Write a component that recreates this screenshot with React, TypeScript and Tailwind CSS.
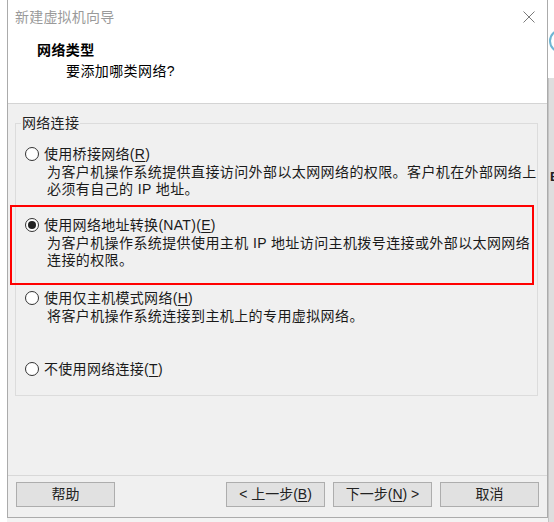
import React from "react";

function Radio({ checked = false }: { checked?: boolean }) {
  return (
    <span className="w-[14px] h-[14px] shrink-0 rounded-full border border-[#333] bg-white flex items-center justify-center">
      {checked && <span className="w-[8px] h-[8px] rounded-full bg-[#222]" />}
    </span>
  );
}

function U({ children }: { children: React.ReactNode }) {
  return <span className="underline underline-offset-[2px] decoration-[1px]">{children}</span>;
}

function Option({
  h,
  checked,
  label,
  desc,
}: {
  h: string;
  checked?: boolean;
  label: React.ReactNode;
  desc: string[];
}) {
  return (
    <div className={`${h} flex flex-col`}>
      <div className="h-[20px] flex items-center gap-[5px]">
        <Radio checked={checked} />
        <span className="text-[14px] leading-[20px] tracking-[0.3px]">{label}</span>
      </div>
      {desc.map((d, i) => (
        <div key={i} className="pl-[22px] text-[14px] leading-[17px] tracking-[0.4px]">
          {d}
        </div>
      ))}
    </div>
  );
}

function Btn({ children }: { children: React.ReactNode }) {
  return (
    <div className="w-[99px] h-[25px] bg-[#e1e1e1] border border-[#adadad] flex items-center justify-center text-[14px] text-[#222]">
      {children}
    </div>
  );
}

export default function App() {
  return (
    <div className="w-[554px] h-[522px] bg-white flex overflow-hidden relative font-['Liberation_Sans','Noto_Sans_CJK_SC',sans-serif] text-[#1a1a1a]">
      <div className="w-[7px] shrink-0" />
      <div className="flex flex-col shrink-0">
        <div className="w-[541px] h-[518px] border-x border-b border-[#ababab] flex flex-col">
          {/* title bar */}
          <div className="h-[33px] bg-white flex items-center justify-between pl-[7px] pr-[12px]">
            <span className="text-[14px] text-[#9a9a9a] tracking-[0.2px] leading-[20px]">新建虚拟机向导</span>
            <svg width="12" height="12" viewBox="0 0 12 12" className="mt-[1px]">
              <path d="M0.5 0.5 L11.5 11.5 M11.5 0.5 L0.5 11.5" stroke="#7a7a7a" strokeWidth="1" fill="none" />
            </svg>
          </div>
          {/* header */}
          <div className="h-[71px] bg-white pt-[7px] pl-[29px] border-b border-[#d4d4d4]">
            <div className="h-[20px] leading-[20px] font-bold text-[14px] tracking-[0.4px] text-black">网络类型</div>
            <div className="h-[22px] leading-[22px] pl-[29px] text-[14px] tracking-[0.4px] text-black">要添加哪类网络?</div>
          </div>
          {/* body */}
          <div className="h-[372px] bg-[#f0f0f0] border-b border-[#d8d8d8] pt-[19px] pl-[7px]">
            <div className="relative w-[523px] h-[273px] border border-[#dcdcdc] pt-[20px] pl-[9px]">
              <span className="absolute left-[5px] top-[-11px] px-[1px] bg-[#f0f0f0] text-[14px] leading-[20px] tracking-[0.3px] text-[#222]">
                网络连接
              </span>
              <Option
                h="h-[71px]"
                label={
                  <>
                    使用桥接网络(<U>R</U>)
                  </>
                }
                desc={["为客户机操作系统提供直接访问外部以太网网络的权限。客户机在外部网络上", "必须有自己的 IP 地址。"]}
              />
              <Option
                h="h-[73px]"
                checked
                label={
                  <>
                    使用网络地址转换(NAT)(<U>E</U>)
                  </>
                }
                desc={["为客户机操作系统提供使用主机 IP 地址访问主机拨号连接或外部以太网网络", "连接的权限。"]}
              />
              <Option
                h="h-[71px]"
                label={
                  <>
                    使用仅主机模式网络(<U>H</U>)
                  </>
                }
                desc={["将客户机操作系统连接到主机上的专用虚拟网络。"]}
              />
              <Option
                h="h-[20px]"
                label={
                  <>
                    不使用网络连接(<U>T</U>)
                  </>
                }
                desc={[]}
              />
            </div>
          </div>
          {/* footer */}
          <div className="flex-1 bg-[#f0f0f0] pt-[6px] px-[8px] flex items-start">
            <Btn>帮助</Btn>
            <div className="flex-1" />
            <div className="flex gap-[8px]">
              <Btn>
                <span>&lt; 上一步(<U>B</U>)</span>
              </Btn>
              <Btn>
                <span>下一步(<U>N</U>) &gt;</span>
              </Btn>
              <Btn>取消</Btn>
            </div>
          </div>
        </div>
        <div className="h-[4px] bg-[#f3f3f3]" />
      </div>
      {/* background window strip */}
      <div className="w-[6px] shrink-0 flex flex-col">
        <div className="h-[78px] bg-white">
          <svg width="6" height="78" viewBox="0 0 6 78">
            <circle cx="13" cy="41" r="11" stroke="#6fb6d4" strokeWidth="2" fill="none" />
          </svg>
        </div>
        <div className="flex-1 bg-[#dedede] border-l border-[#c4c4c4] relative overflow-hidden">
          <span className="absolute left-[1px] top-[92px] text-[13px] font-bold leading-[14px] text-[#222]">E</span>
        </div>
      </div>
      {/* annotation */}
      <div className="absolute left-[10px] top-[205px] w-[524px] h-[80px] border-2 border-[#ff0000]" />
    </div>
  );
}
